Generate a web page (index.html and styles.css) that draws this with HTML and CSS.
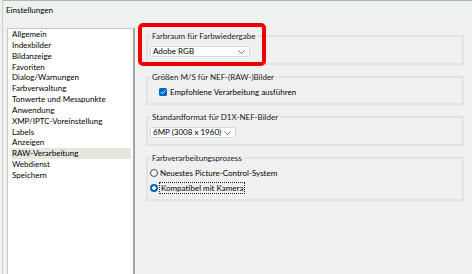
FILE: index.html
```html
<!DOCTYPE html>
<html lang="de">
<head>
    <meta charset="UTF-8">
    <meta name="viewport" content="width=device-width, initial-scale=1.0">
    <title>Einstellungen</title>
    <link rel="stylesheet" href="styles.css">
</head>
<body>

    <div class="window">
        <div class="title-bar">Einstellungen</div>

        <div class="content">
            <ul class="nav-list">
                <li>Allgemein</li>
                <li>Indexbilder</li>
                <li>Bildanzeige</li>
                <li>Favoriten</li>
                <li>Dialog/Warnungen</li>
                <li>Farbverwaltung</li>
                <li>Tonwerte und Messpunkte</li>
                <li>Anwendung</li>
                <li>XMP/IPTC-Voreinstellung</li>
                <li>Labels</li>
                <li>Anzeigen</li>
                <li class="selected">RAW-Verarbeitung</li>
                <li>Webdienst</li>
                <li>Speichern</li>
            </ul>

            <div class="settings">
                <div class="marker"></div>

                <fieldset class="group">
                    <legend>Farbraum für Farbwiedergabe</legend>
                    <div class="select select-wide">
                        <span>Adobe RGB</span>
                        <svg class="chevron" width="7" height="4" viewBox="0 0 7 4"><polyline points="0.5,0.5 3.5,3.5 6.5,0.5" fill="none" stroke="#6a6a6a" stroke-width="0.9"/></svg>
                    </div>
                </fieldset>

                <fieldset class="group">
                    <legend>Größen M/S für NEF-(RAW-)Bilder</legend>
                    <div class="option indent">
                        <span class="checkbox">
                            <svg width="8" height="8" viewBox="0 0 8 8"><polyline points="1.8,4.1 3.3,5.6 6.3,2.4" fill="none" stroke="#fff" stroke-width="0.9"/></svg>
                        </span>
                        <span>Empfohlene Verarbeitung ausführen</span>
                    </div>
                </fieldset>

                <fieldset class="group">
                    <legend>Standardformat für D1X-NEF-Bilder</legend>
                    <div class="select select-narrow">
                        <span>6MP (3008 x 1960)</span>
                        <svg class="chevron" width="7" height="4" viewBox="0 0 7 4"><polyline points="0.5,0.5 3.5,3.5 6.5,0.5" fill="none" stroke="#6a6a6a" stroke-width="0.9"/></svg>
                    </div>
                </fieldset>

                <fieldset class="group radios">
                    <legend>Farbverarbeitungsprozess</legend>
                    <div class="option">
                        <span class="radio"></span>
                        <span>Neuestes Picture-Control-System</span>
                    </div>
                    <div class="option">
                        <span class="radio checked"></span>
                        <span class="focus">Kompatibel mit Kamera</span>
                    </div>
                </fieldset>
            </div>
        </div>
    </div>

</body>
</html>
```

FILE: styles.css
```css
* {
    margin: 0;
    padding: 0;
    box-sizing: border-box;
}

body {
    background-color: #f0f0f0;
    color: #000;
    font-family: Lato, 'Noto Sans', sans-serif;
    font-size: 8px;
    width: 472px;
    height: 274px;
    overflow: hidden;
}

.window {
    height: 274px;
    margin-left: 2px;
    border-top: 1px solid #b4b4b4;
    border-left: 1px solid #cfcfcf;
    display: flex;
    flex-direction: column;
}

.title-bar {
    height: 22px;
    padding: 4px 0 0 3px;
    line-height: 10px;
    background: #eef2ef;
}

.content {
    flex: 1;
    display: flex;
    padding: 5px 0 0 4px;
}


.nav-list {
    width: 128px;
    list-style: none;
    background: #fff;
    border-top: 1px solid #c8c8c8;
    border-left: 1px solid #c8c8c8;
    border-right: 2px solid #a4a4a4;
    padding: 0 2px 0 3px;
}

.nav-list li {
    line-height: 10.85px;
    padding-left: 1px;
}

.nav-list .selected {
    background: #e6e6dd;
}


.settings {
    flex: 1;
    position: relative;
    padding: 3px 8px 0 11px;
}

.marker {
    position: absolute;
    left: 3px;
    top: -5px;
    width: 128px;
    height: 43px;
    border: 4px solid #ee0000;
    border-radius: 5px;
    z-index: 1;
}

.group {
    border: 2px solid #e3e3e3;
    padding: 5px 2px 6px;
}

.group + .group {
    margin-top: 7px;
}

.group legend {
    line-height: 10px;
    padding: 0 2px;
    color: #1a1a1a;
}

.radios {
    display: flex;
    flex-direction: column;
    gap: 5px;
}

.select {
    height: 11px;
    display: flex;
    align-items: center;
    justify-content: space-between;
    background: #fff;
    border: 1px solid #d8d8d8;
    border-radius: 2px;
    padding: 0 4px 0 2px;
    line-height: 9px;
    white-space: nowrap;
}

.chevron {
    flex-shrink: 0;
}

.select-wide {
    width: 100px;
}

.select-narrow {
    width: 86px;
}

.option {
    height: 10px;
    display: flex;
    align-items: center;
    gap: 2px;
    line-height: 10px;
}

.indent {
    margin-left: 9px;
    gap: 3px;
}

.checkbox {
    width: 8px;
    height: 8px;
    border-radius: 1.5px;
    background: #0067c0;
    display: flex;
}

.radio {
    width: 8px;
    height: 8px;
    border-radius: 50%;
    border: 1px solid #4a4a4a;
    background: #f6f6f6;
}

.radio.checked {
    border: none;
    background: radial-gradient(circle, #fff 0 1.6px, #0067c0 2px);
}

.focus {
    outline: 1px dotted #222;
    padding: 0 1px;
}
```
